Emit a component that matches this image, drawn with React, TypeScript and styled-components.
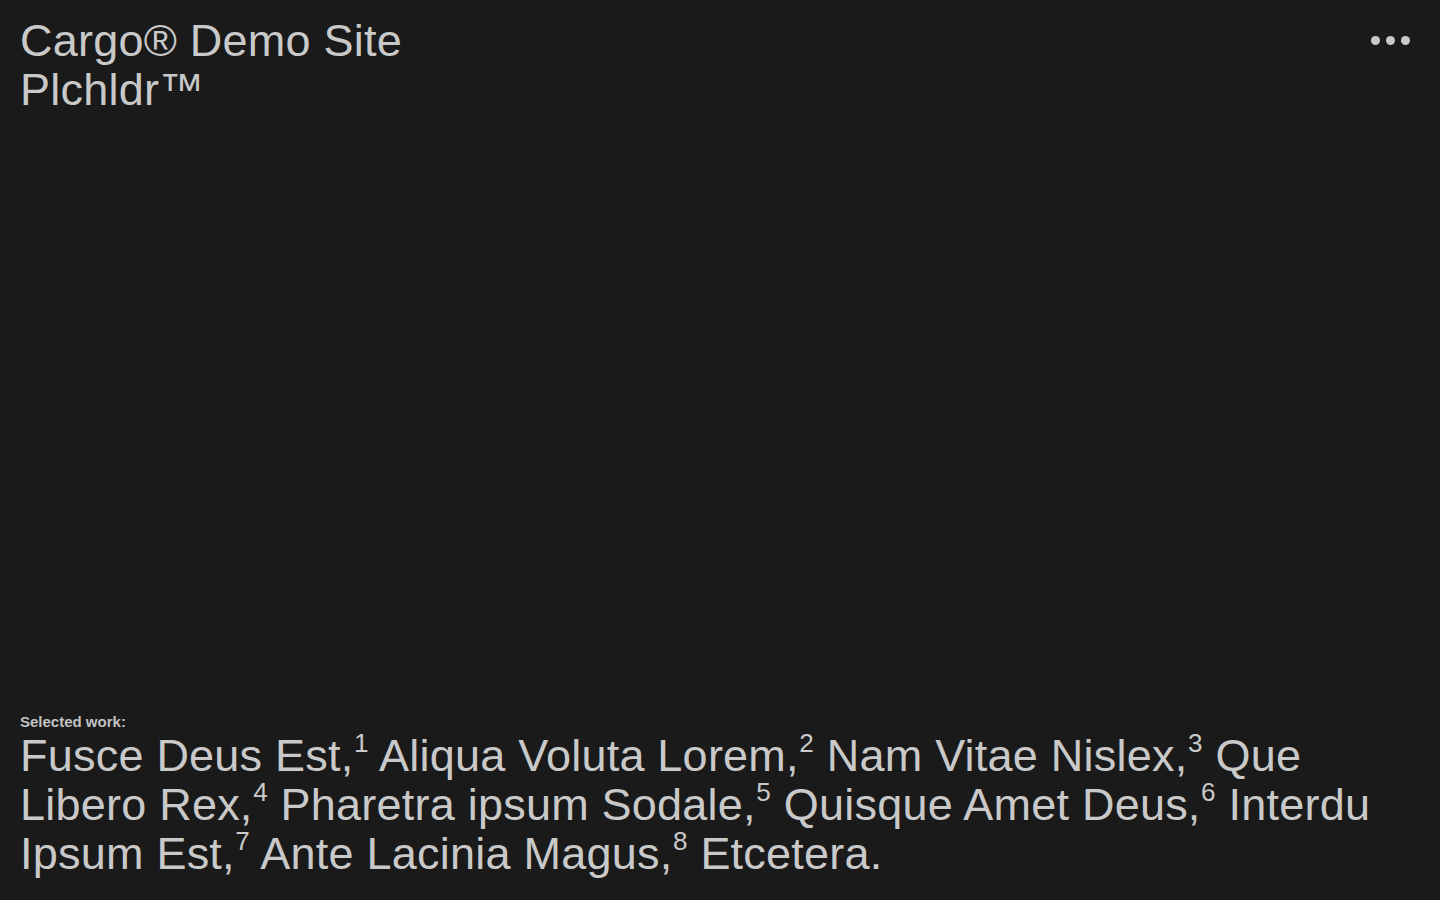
import React from 'react';
import styled, { createGlobalStyle } from 'styled-components';

const GlobalStyle = createGlobalStyle`
  html, body, #root {
    margin: 0;
    padding: 0;
    height: 100%;
  }
  body {
    background: #1a1a1a;
    color: #c9c9c9;
    font-family: 'Liberation Sans', Arial, sans-serif;
    -webkit-font-smoothing: antialiased;
  }
`;

const Page = styled.div`
  height: 100vh;
  display: flex;
  flex-direction: column;
  justify-content: space-between;
  padding: 16px 20px 22px;
  box-sizing: border-box;
`;

const Header = styled.header`
  display: flex;
  justify-content: space-between;
  align-items: flex-start;
`;

const SiteTitle = styled.h1`
  margin: 0;
  font-size: 45px;
  line-height: 49px;
  font-weight: 400;
  letter-spacing: 0.005em;
`;

const MenuButton = styled.button`
  display: flex;
  gap: 6px;
  padding: 0;
  margin-top: 20px;
  margin-right: 10px;
  background: none;
  border: none;
  cursor: pointer;
`;

const Dot = styled.span`
  width: 9px;
  height: 9px;
  border-radius: 50%;
  background: #c9c9c9;
`;

const Footer = styled.section`
  display: flex;
  flex-direction: column;
`;

const Label = styled.div`
  font-size: 15px;
  line-height: 18px;
  font-weight: 700;
  color: #c2c2c2;
`;

const WorkList = styled.p`
  margin: 0;
  font-size: 45px;
  line-height: 49px;
  letter-spacing: 0.005em;
  max-width: 1400px;
`;

const Note = styled.sup`
  font-size: 0.58em;
  line-height: 0;
  vertical-align: 0;
  position: relative;
  top: -0.72em;
  margin-left: 0.02em;
`;

const works = [
  'Fusce Deus Est,',
  'Aliqua Voluta Lorem,',
  'Nam Vitae Nislex,',
  'Que Libero Rex,',
  'Pharetra ipsum Sodale,',
  'Quisque Amet Deus,',
  'Interdu Ipsum Est,',
  'Ante Lacinia Magus,',
];

const App = () => {
  return (
    <>
      <GlobalStyle />
      <Page>
        <Header>
          <SiteTitle>
            Cargo® Demo Site
            <br />
            Plchldr™
          </SiteTitle>
          <MenuButton aria-label='Menu'>
            <Dot />
            <Dot />
            <Dot />
          </MenuButton>
        </Header>
        <Footer>
          <Label>Selected work:</Label>
          <WorkList>
            {works.map((w, i) => (
              <React.Fragment key={i}>
                {w}
                <Note>{i + 1}</Note>{' '}
              </React.Fragment>
            ))}
            Etcetera.
          </WorkList>
        </Footer>
      </Page>
    </>
  );
};

export default App;
